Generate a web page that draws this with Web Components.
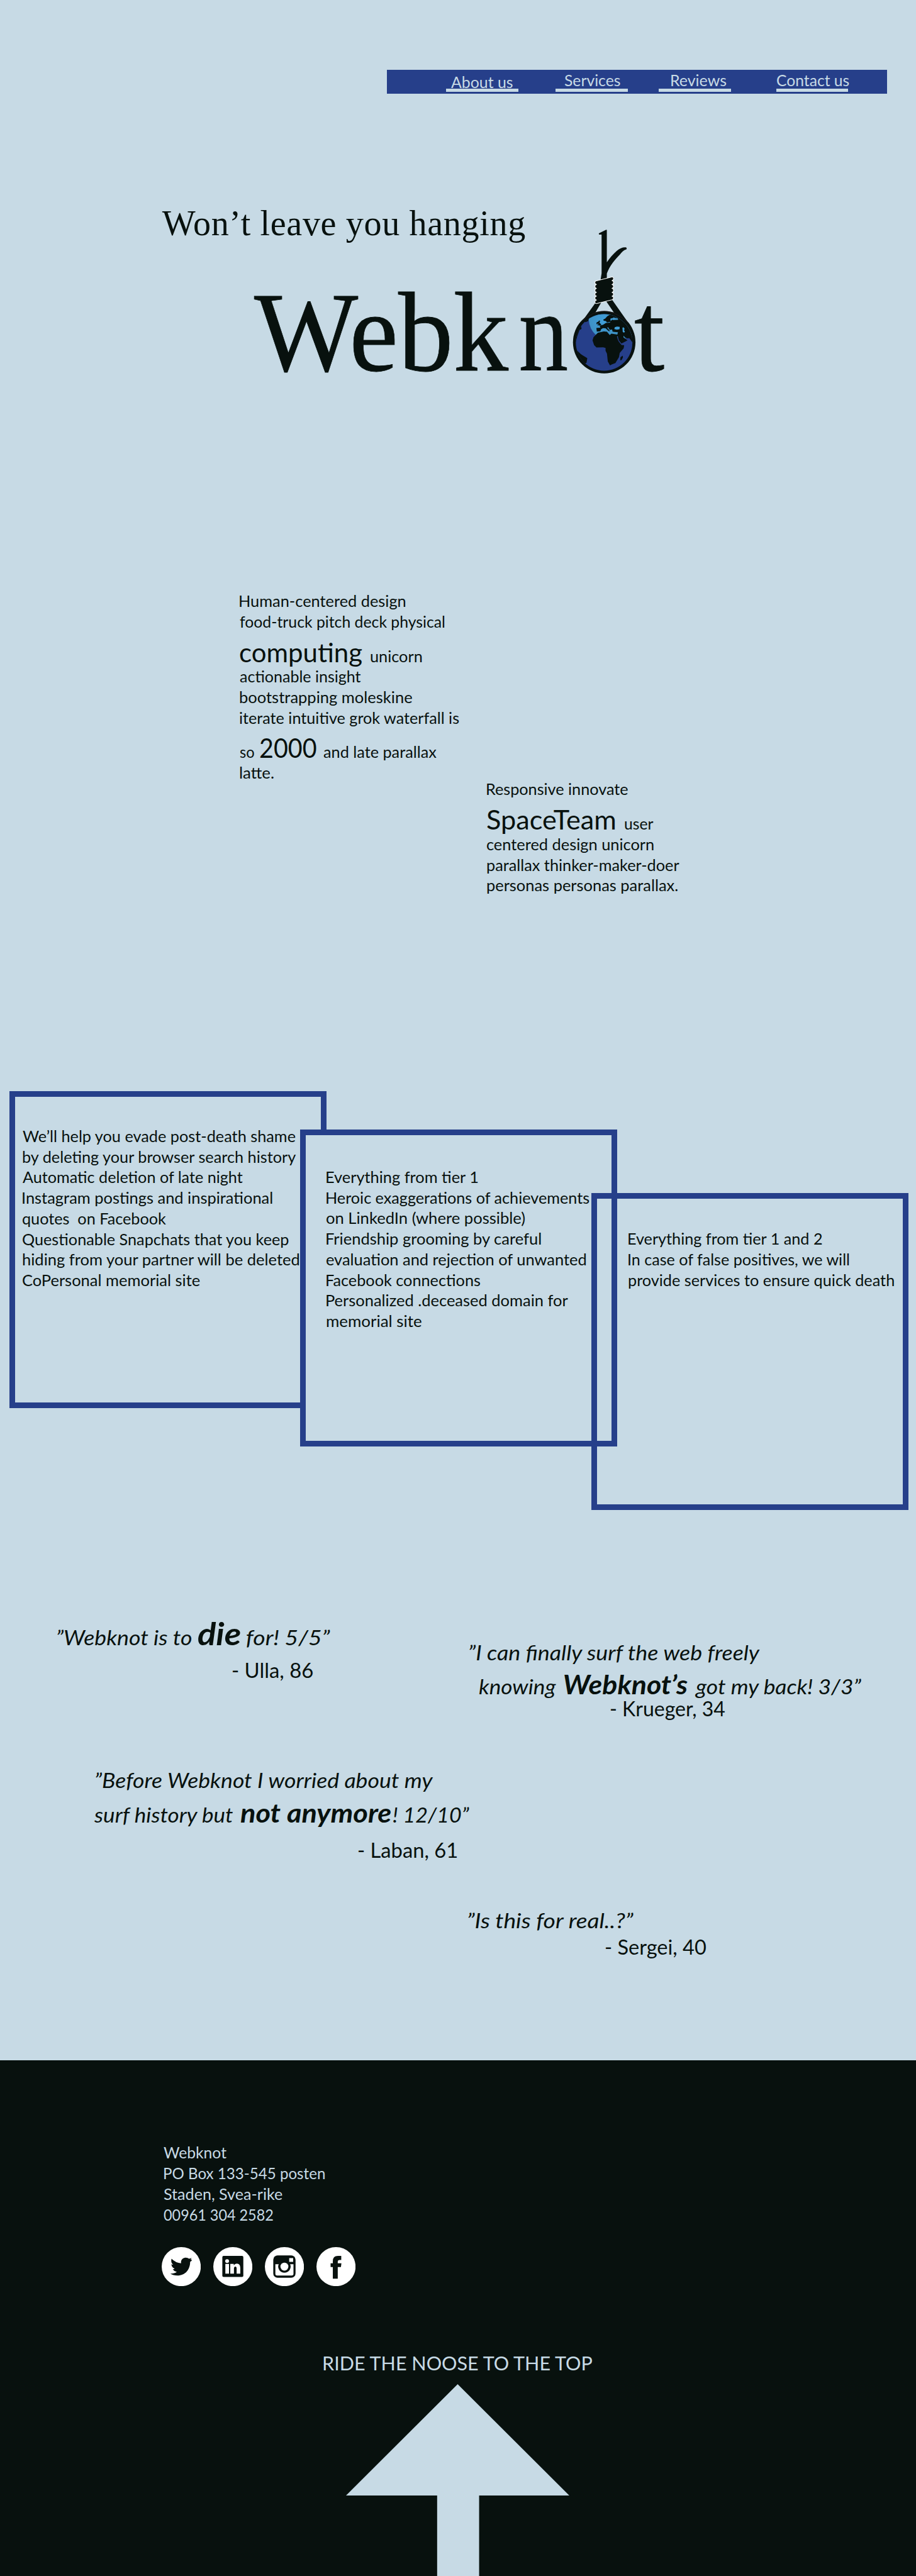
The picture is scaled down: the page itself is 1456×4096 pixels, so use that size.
<!DOCTYPE html>
<html lang="en">
<head>
<meta charset="utf-8">
<title>Webknot</title>
<style>
html{background:#c7dae5}
body{margin:0;color:#08110e;font-family:Lato,"Open Sans",sans-serif;font-size:24.8px}
</style>
</head>
<body>
<wk-page></wk-page>
<script>
/* Styles and attributes are written on a 1920-unit canvas; K converts them to page pixels. */
const K = 1456 / 1920;
const scaled = html => html.replace(/(-?[\d.]+)px/g, (_, n) => (n * K).toFixed(3) + 'px');
const ctx = document.createElement('canvas').getContext('2d');
const define = (name, html, ready) => customElements.define(name, class extends HTMLElement {
  constructor() {
    super();
    this.attachShadow({mode: 'open'}).innerHTML = scaled(html);
  }
  connectedCallback() { if (ready) ready(this, this.shadowRoot); }
});

/* A run of text whose ink spans exactly w units. */
define('t-run', `<style>
:host{display:block;flex:none;line-height:0;white-space:pre}
span{display:inline-block;transform-origin:0 50%}
</style><span><slot></slot></span>`, (el, root) => {
  const w = el.getAttribute('w') * K;
  const px = (el.getAttribute('s') || 32.7) * K;
  el.style.fontSize = px + 'px';
  el.style.width = w + 'px';
  el.style.marginLeft = (el.getAttribute('gap') || 0) * K + 'px';
  const cs = getComputedStyle(el);
  ctx.font = `${cs.fontStyle} ${cs.fontWeight} ${px}px ${cs.fontFamily}`;
  const text = el.textContent;
  const m = ctx.measureText(text);
  const ink = m.actualBoundingBoxLeft + m.actualBoundingBoxRight;
  const span = root.querySelector('span');
  if (el.hasAttribute('spread')) {
    span.style.letterSpacing = (w - ink) / (text.length - 1) + 'px';
    span.style.transform = `translate(${m.actualBoundingBoxLeft}px,1.1px)`;
  } else {
    const k = w / ink;
    span.style.transform = `translate(${m.actualBoundingBoxLeft * k}px,1.1px) scaleX(${k})`;
  }
});

/* A line of runs; h is the distance down to its baseline, x its indent. */
define('t-line', `<style>
:host{display:flex;align-items:baseline}
i{width:0;flex:none;align-self:baseline;display:block}
</style><i></i><slot></slot>`, (el, root) => {
  const h = (el.getAttribute('h') || 43.2) * K;
  el.style.height = h + 'px';
  root.querySelector('i').style.height = h + 'px';
  el.style.paddingLeft = (el.getAttribute('x') || 0) * K + 'px';
});

define('nav-item', `<style>
:host{display:block;width:151px;height:51px;flex:none;color:#c7dae5}
div{height:40px}
hr{margin:0;border:0;height:7px;background:#c7dae5}
</style><div><slot></slot></div><hr>`);

define('nav-bar', `<style>
:host{display:flex;box-sizing:border-box;margin-left:811px;width:1048px;height:51px;padding-left:124px;background:#263f8a}
.a{margin-left:79px}.b{margin-left:65px}.c{margin-left:95px}
</style>
<nav-item><t-line h="37" x="11"><t-run w="129">About us</t-run></t-line></nav-item>
<nav-item class="a"><t-line h="33.500" x="18.5"><t-run w="117">Services</t-run></t-line></nav-item>
<nav-item class="b"><t-line h="33.500" x="26"><t-run w="115">Reviews</t-run></t-line></nav-item>
<nav-item class="c"><t-line h="33.500" x="2"><t-run w="151">Contact us</t-run></t-line></nav-item>`);

define('noose-globe', `<style>
:host{display:block;flex:none;width:133.3px;height:272px;margin:0 -3.8px 0 11px}
svg{display:block;overflow:visible;width:133.3px;height:280px}
</style>
<svg viewBox="150 132 400 840">
<defs>
<radialGradient id="g" gradientUnits="userSpaceOnUse" cx="350" cy="640" r="110"><stop offset="0" stop-color="#419fd9"/><stop offset="1" stop-color="#3d8fc2"/></radialGradient>
<clipPath id="c"><circle cx="349" cy="775" r="178"/></clipPath>
</defs>
<g fill="#08110e">
<path d="M316 88L362 66L366 68V270C385 243 405 219 428 199C448 181 470 174 488 177Q494 183 489 189C470 195 460 206 449 221C420 250 382 295 366 342V378H327L333 340V96H318Q314 92 316 88Z"/>
<path d="M296 524L205 650L240 680L333 520ZM362 516L460 660L493 640L398 505Z"/>
<circle cx="349.500" cy="773.500" r="196.500"/>
</g>
<path d="M210 640Q280 577 349 577T500 650" fill="none" stroke="#4a2430" stroke-width="1.500"/>
<path fill="#08110e" stroke="#fff" stroke-width="4" stroke-linejoin="round" d="M297 388L396 363Q408 361 408 374Q408 383 398 386Q408 387 408 398Q408 408 398 411Q408 412 408 422Q408 432 398 435Q408 436 408 447Q408 457 398 460Q408 461 408 471Q408 481 398 484Q408 485 408 495Q408 504 398 507L304 530Q291 532 291 519Q291 511 301 508Q291 506 291 495Q291 486 301 483Q291 482 291 471Q291 462 301 459Q291 458 291 447Q291 438 301 435Q291 433 291 422Q291 413 301 410Q291 408 291 398Q291 390 297 388Z"/>
<g clip-path="url(#c)">
<path fill="#263f8a" d="M165 590H535V960H165Z"/>
<path fill="url(#g)" d="M252 630L270 590H535V740H400L296 727Q256 690 252 630Z"/>
<g fill="#08110e">
<path d="M165 590L265 590L248 640L232 647L222 643L202 663L207 690L194 697L180 735L171 770L165 790Z"/>
<path d="M165 800L175 822L202 848L214 856L243 874L238 904L228 908L245 960L165 960Z"/>
<path d="M385 600L415 604L425 615L439 623L424 622L407 618L396 628L406 635L391 645L382 646L367 649L360 640L347 638L343 631L356 625L368 611Z"/>
<path d="M317 636L324 640L319 650L332 663L322 668L304 666L314 660L309 650ZM302 648L312 644L310 658L300 660Z"/>
<path d="M424 600L540 600V790H525L527 775L508 748L482 749L470 731L474 746L496 762L458 782L442 762L435 736L430 737Q432 754 440 768L458 791L475 793L472 812L447 841L442 868L420 905L397 913L386 919L372 895L367 846L358 827V810L343 806L301 807L286 792L276 762L282 742L296 727L310 714L347 706L367 708L384 728L395 720L432 725L436 711L412 709L402 707L399 694L384 696L374 679L368 682L386 704L378 704L358 686L342 685L330 692L325 705L303 707L300 684L325 682L321 669L342 664L360 652L384 650L400 634L438 632Z"/>
<path d="M466 858L467 870L458 887L450 887L452 868Z"/>
</g>
<path fill="#419fd9" d="M416 679L430 675L447 677L446 692L429 695L413 691ZM464 682L472 680L478 690L474 698L480 708L474 714L466 709ZM388 626L400 622L402 630L390 640Z"/>
<path fill="#3d8fc2" d="M471 732L481 744L491 747L482 749L471 744Z"/>
</g>
</svg>`);

define('logo-block', `<style>
:host{display:block;font-family:"Liberation Serif",serif}
.w{-webkit-text-stroke:1px #08110e}
</style>
<t-line h="295" x="340"><t-run w="760" s="74" spread>Won’t leave you hanging</t-run></t-line>
<t-line h="284" x="533"><t-run class="w" w="533" s="237">Webk</t-run><t-run class="w" gap="26.500" w="97" s="237">n</t-run><noose-globe></noose-globe><t-run class="w" w="61" s="237">t</t-run></t-line>`);

define('intro-copy', `<style>
:host{display:flex;height:1092px;padding-left:502px}
.l{width:519px;flex:none}
</style>
<div class="l">
<t-line h="495"><t-run w="348">Human-centered design</t-run></t-line>
<t-line h="43.500"><t-run w="430">food-truck pitch deck physical</t-run></t-line>
<t-line h="72.500"><t-run w="257" s="56">computing</t-run><t-run gap="18" w="108">unicorn</t-run></t-line>
<t-line h="43"><t-run w="254">actionable insight</t-run></t-line>
<t-line h="43"><t-run w="362">bootstrapping moleskine</t-run></t-line>
<t-line h="43"><t-run w="460">iterate intuitive grok waterfall is</t-run></t-line>
<t-line h="72"><t-run w="31">so</t-run><t-run gap="11.500" w="118" s="55">2000</t-run><t-run gap="16" w="238">and late parallax</t-run></t-line>
<t-line h="43"><t-run w="71.500">latte.</t-run></t-line>
</div>
<div>
<t-line h="889.500"><t-run w="296">Responsive innovate</t-run></t-line>
<t-line h="72.500"><t-run w="268" s="55.500">SpaceTeam</t-run><t-run gap="20" w="60">user</t-run></t-line>
<t-line h="43.500"><t-run w="350">centered design unicorn</t-run></t-line>
<t-line h="43"><t-run w="403">parallax thinker-maker-doer</t-run></t-line>
<t-line h="43"><t-run w="400">personas personas parallax.</t-run></t-line>
</div>`);

define('tier-box', `<style>
:host{display:block;box-sizing:border-box;flex:none;width:664px;height:664px;border:12px solid #263f8a;border-top-width:13px}
</style><slot></slot>`);

define('tier-row', `<style>
:host{display:flex;align-items:flex-start;padding:420px 0 0 20px;height:878px}
.two{margin:81px 0 0 -55px;background:#c7dae5}
.three{margin:214px 0 0 -53px}
</style>
<tier-box>
<t-line h="93.500" x="15"><t-run w="573">We’ll help you evade post-death shame</t-run></t-line>
<t-line x="15"><t-run w="576">by deleting your browser search history</t-run></t-line>
<t-line x="15"><t-run w="462">Automatic deletion of late night</t-run></t-line>
<t-line x="15"><t-run w="524">Instagram postings and inspirational</t-run></t-line>
<t-line x="15"><t-run w="301">quotes  on Facebook</t-run></t-line>
<t-line x="15"><t-run w="558">Questionable Snapchats that you keep</t-run></t-line>
<t-line x="15"><t-run w="583">hiding from your partner will be deleted</t-run></t-line>
<t-line x="15"><t-run w="372">CoPersonal memorial site</t-run></t-line>
</tier-box>
<tier-box class="two">
<t-line h="98" x="43"><t-run w="318">Everything from tier 1</t-run></t-line>
<t-line x="43"><t-run w="551">Heroic exaggerations of achievements</t-run></t-line>
<t-line x="43"><t-run w="416">on LinkedIn (where possible)</t-run></t-line>
<t-line x="43"><t-run w="451">Friendship grooming by careful</t-run></t-line>
<t-line x="43"><t-run w="545">evaluation and rejection of unwanted</t-run></t-line>
<t-line x="43"><t-run w="322">Facebook connections</t-run></t-line>
<t-line x="43"><t-run w="506">Personalized .deceased domain for</t-run></t-line>
<t-line x="43"><t-run w="200">memorial site</t-run></t-line>
</tier-box>
<tier-box class="three">
<t-line h="95" x="65"><t-run w="407">Everything from tier 1 and 2</t-run></t-line>
<t-line x="65"><t-run w="465">In case of false positives, we will</t-run></t-line>
<t-line x="65"><t-run w="557">provide services to ensure quick death</t-run></t-line>
</tier-box>`);

define('review-wall', `<style>
:host{display:flex;height:1154px}
.l{width:970px;flex:none}
.q{font-style:italic}
.b{font-weight:bold}
</style>
<div class="l">
<t-line class="q" h="283" x="120"><t-run w="282" s="42.500">”Webknot is to</t-run><t-run class="b" gap="14" w="88" s="66">die</t-run><t-run gap="12.500" w="176" s="42.500">for! 5/5”</t-run></t-line>
<t-line h="68.600" x="486"><t-run w="170" s="42">- Ulla, 86</t-run></t-line>
<t-line class="q" h="230.800" x="200.600"><t-run w="708" s="42.500">”Before Webknot I worried about my</t-run></t-line>
<t-line class="q" h="72" x="197"><t-run w="293" s="42.500">surf history but</t-run><t-run class="b" gap="14" w="316" s="56">not anymore</t-run><t-run gap="4" w="160" s="42.500">! 12/10”</t-run></t-line>
<t-line h="74" x="750"><t-run w="208" s="42">- Laban, 61</t-run></t-line>
</div>
<div>
<t-line class="q" h="313.800" x="13.400"><t-run w="611" s="42.500">”I can finally surf the web freely</t-run></t-line>
<t-line class="q" h="71.200" x="34"><t-run w="162" s="42.500">knowing</t-run><t-run class="b" gap="17" w="259" s="54.500">Webknot’s</t-run><t-run gap="15.500" w="350" s="42.500">got my back! 3/3”</t-run></t-line>
<t-line h="46" x="308.600"><t-run w="240.500" s="42">- Krueger, 34</t-run></t-line>
<t-line class="q" h="444.400" x="10.500"><t-run w="349" s="42.500">”Is this for real..?”</t-run></t-line>
<t-line h="55.600" x="298.600"><t-run w="211.500" s="42">- Sergei, 40</t-run></t-line>
</div>`);

define('social-links', `<style>
:host{display:flex;gap:26px;padding:57px 0 0 339px}
svg{display:block;width:82px;height:82px}
</style>
<svg viewBox="57 63 246 246"><circle cx="180" cy="186" r="123" fill="#fff"/><path fill="#08110e" d="M111 230Q136 231 152 219Q134 214 127 203Q134 202 138 199Q119 190 118 171Q124 175 129 174Q112 158 119 136Q145 162 179 165C176 143 190 129 208 129Q221 129 229 136Q238 134 245 131L239 142L247 141L244 147L247 148L236 156C236 205 205 242 156 242Q130 242 111 230Z"/></svg>
<svg viewBox="381 63 246 246"><circle cx="504" cy="186" r="123" fill="#fff"/><rect x="438" y="118" width="132" height="133" rx="8" fill="#08110e"/><g fill="#fff"><circle cx="468" cy="151" r="12"/><path d="M457 169H480V230H457ZM488 169H510V178Q517 167 529 167Q551 167 551 195V230H528V200Q528 186 520 186Q511 186 511 200V230H488Z"/></g></svg>
<svg viewBox="705 63 246 246"><circle cx="828" cy="186" r="123" fill="#fff"/><rect x="758" y="115" width="140" height="141" rx="27" fill="#08110e"/><path fill="#fff" d="M858 132H883V156H858ZM771 171H792Q784 190 796 208Q809 224 828 224Q847 224 860 208Q872 190 864 171H885V231Q885 242 874 242H782Q771 242 771 231Z"/><circle cx="828" cy="186" r="25" fill="#fff"/></svg>
<svg viewBox="1029 63 246 246"><circle cx="1152" cy="186" r="123" fill="#fff"/><path fill="#08110e" d="M1185 118V144H1175Q1163 144 1163 155V165H1186L1183 189H1163V262H1132V189H1118V165H1132V151Q1132 118 1164 118Z"/></svg>`);

define('page-footer', `<style>
:host{display:flex;flex-direction:column;flex:1;min-height:0;background:#08110e;color:#c7dae5}
.arrow{display:block;flex:1;min-height:0;width:468px;margin:31px 0 0 725px}
</style>
<t-line h="205" x="343"><t-run w="132">Webknot</t-run></t-line>
<t-line h="43" x="344"><t-run w="337">PO Box 133-545 posten</t-run></t-line>
<t-line h="43" x="343"><t-run w="249.500">Staden, Svea-rike</t-run></t-line>
<t-line h="43.500" x="343"><t-run w="230">00961 304 2582</t-run></t-line>
<social-links></social-links>
<t-line h="175" x="678"><t-run w="569" s="41.700">RIDE THE NOOSE TO THE TOP</t-run></t-line>
<svg class="arrow" viewBox="0 0 468 403" preserveAspectRatio="xMinYMin slice"><path fill="#c7dae5" d="M234 0L468 233.500H279V410H191V233.500H0Z"/></svg>`);

define('wk-page', `<style>:host{display:flex;flex-direction:column;box-sizing:border-box;width:1920px;height:100vh;overflow:hidden;padding-top:146px}
:host>*{flex:none}
nav-bar,logo-block,intro-copy,tier-row,review-wall{flex:none}</style>
<nav-bar></nav-bar><logo-block></logo-block><intro-copy></intro-copy><tier-row></tier-row><review-wall></review-wall><page-footer></page-footer>`);
</script>
</body>
</html>
